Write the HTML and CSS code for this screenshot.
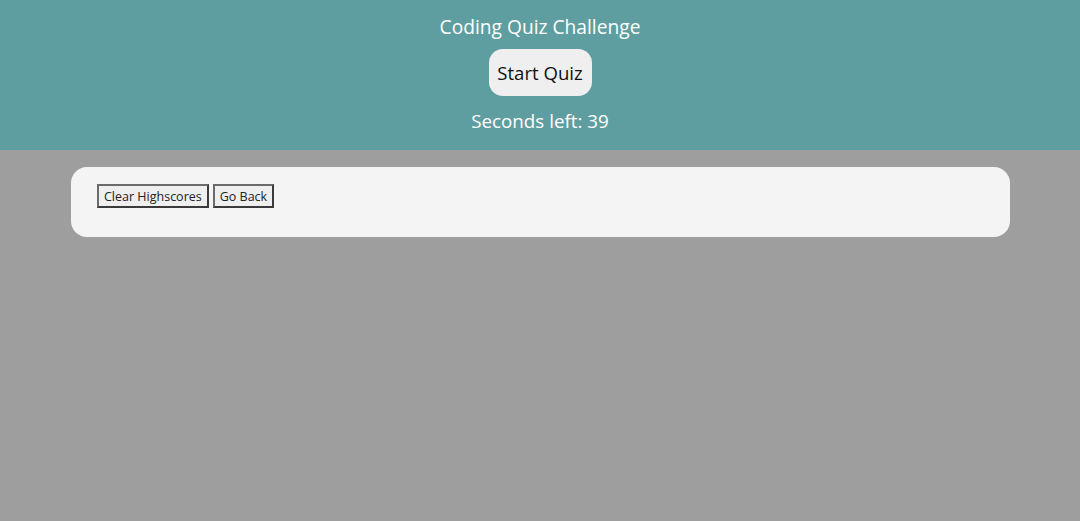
FILE: index.html
```html
<!DOCTYPE html>
<html>
<head>
<meta charset="utf-8">
<link rel="stylesheet" href="styles.css">
</head>
<body>
<header class="top">
  <h1 class="title">Coding Quiz Challenge</h1>
  <button class="start">Start Quiz</button>
  <div class="timer">Seconds left: 39</div>
</header>
<main class="card">
  <div class="actions">
    <button class="btn">Clear Highscores</button>
    <button class="btn">Go Back</button>
  </div>
</main>
</body>
</html>
```
FILE: styles.css
```css
html, body {
  margin: 0;
  padding: 0;
  background: #9e9e9e;
  font-family: "Open Sans", "Noto Sans", sans-serif;
  height: 100%;
}
.top {
  background: #5f9ea0;
  height: 150px;
  display: flex;
  flex-direction: column;
  align-items: center;
  color: #fff;
  box-sizing: border-box;
  padding-top: 13px;
}
.title {
  margin: 0;
  font-size: 19.2px;
  font-weight: 400;
  line-height: 28px;
}
.start {
  margin-top: 8px;
  width: 103px;
  height: 47px;
  border: none;
  border-radius: 14px;
  background: #efefef;
  color: #111;
  font-family: inherit;
  font-size: 18.6px;
  padding: 0;
}
.timer {
  margin-top: 11px;
  font-size: 18.8px;
  line-height: 28px;
}
.card {
  margin: 17px 70px 0 71px;
  background: #f4f4f4;
  border-radius: 16px;
  height: 70px;
  box-sizing: border-box;
  padding: 17px 26px;
}
.actions {
  display: flex;
  gap: 4px;
}
.btn {
  font-family: inherit;
  font-size: 12.5px;
  height: 24px;
  padding: 0 5px;
  background: #efefef;
  color: #222;
  border: 2px solid #4a4a4a;
  border-color: #6a6a6a #3a3a3a #3a3a3a #6a6a6a;
}
```
